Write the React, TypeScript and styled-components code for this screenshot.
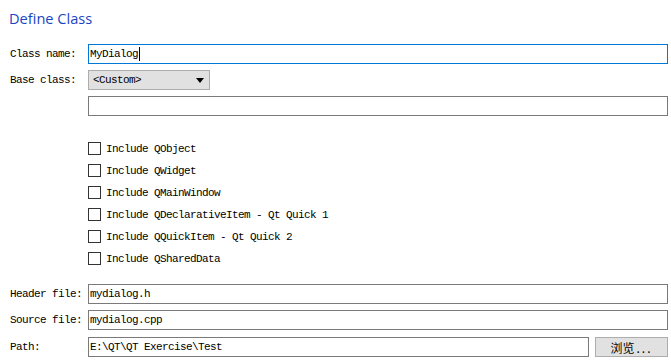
import React from 'react';
import styled, { createGlobalStyle } from 'styled-components';

const GlobalStyle = createGlobalStyle`
  html, body {
    margin: 0;
    padding: 0;
    background: #ffffff;
  }
  * {
    box-sizing: border-box;
  }
`;

const mono = `"Liberation Mono", "DejaVu Sans Mono", monospace`;

const Page = styled.div`
  width: 671px;
  height: 364px;
  padding: 0 3px 0 10px;
  display: flex;
  flex-direction: column;
  font-family: ${mono};
  font-size: 11px;
  letter-spacing: -0.6px;
  color: #000;
`;

const Title = styled.div`
  font-family: "Open Sans", "Noto Sans", sans-serif;
  font-size: 14.6px;
  letter-spacing: 0;
  line-height: 20px;
  height: 20px;
  margin-top: 8px;
  margin-left: -1px;
  color: #1a45c2;
`;

const Row = styled.div<{ $top: number }>`
  display: grid;
  grid-template-columns: 78px 1fr;
  align-items: center;
  height: 20px;
  margin-top: ${(p) => p.$top}px;
`;

const Label = styled.span`
  white-space: nowrap;
`;

const Input = styled.div<{ $focused?: boolean; $grow?: boolean }>`
  height: 20px;
  border: 1px solid ${(p) => (p.$focused ? '#0078d7' : '#7a7a7a')};
  background: #fff;
  padding: 0 1px;
  display: flex;
  align-items: center;
  white-space: nowrap;
  min-width: 0;
  flex: ${(p) => (p.$grow ? 1 : 'initial')};
`;

const Caret = styled.span`
  display: inline-block;
  width: 1px;
  height: 14px;
  background: #000;
  margin-left: 0.5px;
`;

const Combo = styled.div`
  width: 122px;
  height: 20px;
  border: 1px solid #adadad;
  background: #e1e1e1;
  display: flex;
  align-items: center;
  justify-content: space-between;
  padding: 0 5px 0 4px;
`;

const Arrow = styled.svg`
  width: 8px;
  height: 5px;
`;

const Spacer = styled.span``;

const Checks = styled.div`
  margin-top: 26px;
  margin-left: 78px;
  display: flex;
  flex-direction: column;
  gap: 9px;
`;

const Check = styled.label`
  display: flex;
  align-items: center;
  gap: 5px;
  height: 13px;
`;

const Box = styled.span`
  width: 13px;
  height: 13px;
  border: 1px solid #333333;
  background: #fff;
  flex: none;
`;

const PathField = styled.div`
  display: flex;
  gap: 6px;
  align-items: center;
`;

const Button = styled.div`
  width: 73px;
  height: 20px;
  flex: none;
  border: 1px solid #adadad;
  background: #e1e1e1;
  display: flex;
  align-items: center;
  justify-content: center;
  font-family: "Noto Sans CJK SC", "Noto Sans", sans-serif;
  font-size: 12px;
  letter-spacing: 0;
  color: #000;
`;

const Dots = styled.span`
  letter-spacing: 2px;
  margin-left: 2px;
`;

const checks = [
  'Include QObject',
  'Include QWidget',
  'Include QMainWindow',
  'Include QDeclarativeItem - Qt Quick 1',
  'Include QQuickItem - Qt Quick 2',
  'Include QSharedData',
];

const App = () => (
  <>
    <GlobalStyle />
    <Page>
      <Title>Define Class</Title>
      <Row $top={16}>
        <Label>Class name:</Label>
        <Input $focused>
          MyDialog
          <Caret />
        </Input>
      </Row>
      <Row $top={6}>
        <Label>Base class:</Label>
        <Combo>
          <span>&lt;Custom&gt;</span>
          <Arrow viewBox="0 0 8 5">
            <path d="M0 0 H8 L4 5 Z" fill="#000" />
          </Arrow>
        </Combo>
      </Row>
      <Row $top={6}>
        <Spacer />
        <Input />
      </Row>
      <Checks>
        {checks.map((c) => (
          <Check key={c}>
            <Box />
            {c}
          </Check>
        ))}
      </Checks>
      <Row $top={19}>
        <Label>Header file:</Label>
        <Input>mydialog.h</Input>
      </Row>
      <Row $top={6}>
        <Label>Source file:</Label>
        <Input>mydialog.cpp</Input>
      </Row>
      <Row $top={7}>
        <Label>Path:</Label>
        <PathField>
          <Input $grow>E:\QT\QT Exercise\Test</Input>
          <Button>
            浏览<Dots>...</Dots>
          </Button>
        </PathField>
      </Row>
    </Page>
  </>
);

export default App;
